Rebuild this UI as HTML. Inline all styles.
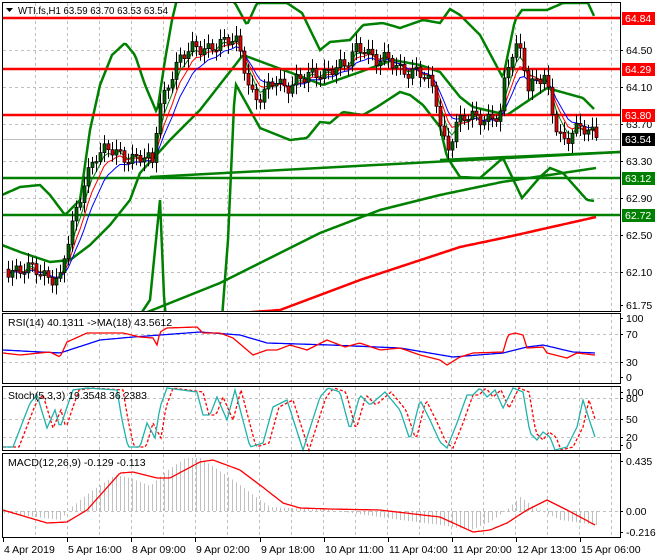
<!DOCTYPE html>
<html><head><meta charset="utf-8"><style>
html,body{margin:0;padding:0;background:#fff;width:660px;height:560px;overflow:hidden}
svg{display:block;font-family:"Liberation Sans",Tahoma,sans-serif}
</style></head><body>
<svg id="s" width="660" height="560" viewBox="0 0 660 560" xmlns="http://www.w3.org/2000/svg">
<rect width="660" height="560" fill="#fff"/>
<g id="grid" stroke="#c0c0c0" stroke-dasharray="3,3" stroke-width="1"></g>
<g id="lines"></g>
<g id="ind"></g>
<g id="frames" fill="none" stroke="#000" stroke-width="1">
<rect x="2.5" y="2.5" width="618" height="309"/>
<rect x="2.5" y="313.5" width="618" height="70"/>
<rect x="2.5" y="386.5" width="618" height="64"/>
<rect x="2.5" y="453.5" width="618" height="84"/>
</g>
<g id="txt" font-size="10.5" fill="#000"></g>
<text x="18" y="14" font-size="10.5" textLength="150" lengthAdjust="spacingAndGlyphs">WTI.fs,H1  63.59 63.70 63.53 63.54</text>
<path d="M6 8 L13 8 L9.5 12 Z" fill="#000"/>
<text x="8" y="326" font-size="10.5">RSI(14) 40.1311  -&gt;MA(18) 43.5612</text>
<text x="8" y="399" font-size="10.5">Stoch(5,3,3) 19.3548 36.2383</text>
<text x="8" y="466" font-size="10.5">MACD(12,26,9) -0.129 -0.113</text>
</svg>
<script>
var NS="http://www.w3.org/2000/svg",S=document.getElementById('s');
function el(p,t,a,txt){var e=document.createElementNS(NS,t);for(var k in a)e.setAttribute(k,a[k]);if(txt!=null)e.textContent=txt;p.appendChild(e);return e;}
function ip(P,x){if(x<=P[0][0])return P[0][1];for(var i=1;i<P.length;i++){if(x<=P[i][0]){var a=P[i-1],b=P[i];return a[1]+(b[1]-a[1])*(x-a[0])/(b[0]-a[0]);}}return P[P.length-1][1];}
var G=document.getElementById('grid'),L=document.getElementById('lines'),I=document.getElementById('ind'),T=document.getElementById('txt');
function pl(P,col,w,dash,x0,x1,step,grp){var d="";step=step||2;x0=x0==null?P[0][0]:x0;x1=x1==null?P[P.length-1][0]:x1;for(var x=x0;x<=x1;x+=step){d+=(d?"L":"M")+x+" "+ip(P,x).toFixed(1);}var a={d:d,fill:"none",stroke:col,"stroke-width":w};if(dash)a["stroke-dasharray"]=dash;return el(grp||L,"path",a);}
for(var x=35;x<620;x+=32){[[3,311],[314,383],[387,450],[454,537]].forEach(function(r){el(G,"line",{x1:x+.5,y1:r[0],x2:x+.5,y2:r[1]});});}
[50,87,124,161,198,235,272,334,362,398,419,437,511].forEach(function(y){el(G,"line",{x1:3,y1:y+.5,x2:620,y2:y+.5});});
el(L,"line",{x1:3,y1:139.5,x2:620,y2:139.5,stroke:"#c0c0c0"});
var cp=el(S,"clipPath",{id:"cm"});el(cp,"rect",{x:3,y:3,width:617,height:308});
L.setAttribute("clip-path","url(#cm)");
pl([[140,315],[220,283],[320,233],[380,210],[440,195],[502,182],[596,168]],"#008000",2.5);
pl([[170,318],[280,310],[360,280],[460,247],[503,238],[596,217]],"#ff0000",2.5);
el(L,"line",{x1:150,y1:177,x2:620,y2:152,stroke:"#008000","stroke-width":2.5});
el(L,"line",{x1:440,y1:160,x2:620,y2:152,stroke:"#008000","stroke-width":2.5});
pl([[2,195],[20,187],[40,185],[50,195],[65,215],[80,200],[90,130],[100,85],[112,55],[125,43],[135,55],[145,85],[157,113],[165,60],[172,20],[178,-5],[225,-5],[235,3],[247,25],[257,3],[287,3],[302,13],[320,50],[330,42],[350,40],[363,25],[383,23],[400,28],[423,20],[440,23],[450,9],[460,15],[480,35],[503,78],[515,20],[522,10],[547,10],[563,3],[588,3],[595,18]],"#008000",2.5);
pl([[2,245],[20,252],[50,262],[70,260],[90,245],[110,225],[130,200],[140,173],[170,140],[200,110],[243,55],[270,65],[297,75],[323,85],[360,72],[393,60],[420,65],[440,72],[460,97],[473,107],[507,115],[547,88],[583,98],[595,110]],"#008000",2.5);
pl([[2,330],[130,330],[150,300],[160,200],[165,320],[222,318],[228,240],[235,83],[250,110],[260,128],[290,140],[307,138],[320,122],[330,123],[343,112],[363,115],[377,107],[400,92],[410,95],[423,105],[440,127],[447,157],[460,177],[480,178],[503,158],[522,198],[540,177],[550,168],[563,173],[587,200],[595,201]],"#008000",2.5);
[[18,"#ff0000"],[69,"#ff0000"],[115,"#ff0000"],[178,"#008000"],[215,"#008000"]].forEach(function(a){el(L,"line",{x1:3,y1:a[0],x2:620,y2:a[0],stroke:a[1],"stroke-width":2.5});});
var CP=[[2,265],[20,272],[35,270],[50,275],[60,280],[65,255],[70,235],[78,205],[85,175],[95,155],[110,152],[125,155],[140,158],[152,165],[158,110],[163,95],[170,75],[180,60],[195,48],[210,45],[225,45],[235,40],[242,55],[250,90],[258,100],[265,95],[275,80],[285,85],[295,80],[305,80],[315,75],[325,70],[335,65],[345,70],[355,50],[365,45],[375,60],[385,62],[400,68],[415,70],[425,80],[435,95],[442,135],[448,145],[455,125],[465,120],[480,117],[500,115],[505,80],[510,60],[515,48],[522,50],[528,85],[535,80],[545,80],[550,108],[557,130],[565,140],[572,128],[580,130],[590,135],[596,136]];
var cl=[],xs=[];for(var i=0;i<149;i++){var x=4+4*i;xs.push(x);cl.push(ip(CP,x)+6*Math.sin(i*1.7)+4*Math.sin(i*0.63+1));}
function ema(n,off){var k=2/(n+1),v=cl[0],P=[];for(var i=0;i<cl.length;i++){v=v+(cl[i]-v)*k;P.push([xs[i],v+off]);}return P;}
pl(ema(4,0),"#008000",1,null,8,596,4);pl(ema(6,1),"#ff0000",1,null,8,596,4);pl(ema(9,2),"#0000ff",1,null,8,596,4);
var Cg=el(L,"g",{});
for(var i=1;i<cl.length;i++){var x=xs[i],o=cl[i-1],c=cl[i],hi=Math.min(o,c)-3-Math.abs(7*Math.sin(i*2.3)),lo=Math.max(o,c)+3+Math.abs(7*Math.cos(i*1.9));
el(Cg,"line",{x1:x+.5,y1:hi,x2:x+.5,y2:lo,stroke:"#000"});
var t=Math.min(o,c),h=Math.max(Math.abs(o-c),1.5);el(Cg,"rect",{x:x-1,y:t,width:3,height:h,fill:c<o?"#006400":"#e00000",stroke:"#000","stroke-width":0.7});}
pl([[3,350],[60,353],[100,340],[133,337],[200,332],[240,335],[267,343],[330,345],[400,348],[453,357],[503,353],[527,347],[543,345],[573,352],[595,353]],"#0000ff",1.3,null,null,null,2,I);
pl([[3,353],[20,355],[50,352],[60,357],[67,342],[87,333],[123,333],[140,337],[153,338],[157,345],[160,332],[167,328],[197,327],[203,333],[220,333],[233,338],[253,355],[267,350],[277,350],[290,345],[307,350],[327,340],[345,347],[360,343],[380,350],[400,348],[420,355],[440,360],[447,365],[460,357],[473,353],[503,352],[508,335],[515,333],[523,335],[527,348],[543,347],[547,353],[567,358],[577,353],[595,355]],"#ff0000",1.3,null,null,null,2,I);
var ST=[[3,447],[13,447],[30,403],[37,395],[47,428],[55,410],[60,428],[67,407],[73,390],[87,388],[117,390],[122,420],[128,447],[140,447],[147,423],[155,438],[160,407],[167,388],[197,392],[203,415],[210,415],[217,397],[227,420],[235,390],[250,447],[263,443],[273,407],[287,400],[303,450],[320,397],[328,388],[340,392],[350,430],[360,395],[370,405],[385,392],[400,410],[410,440],[420,400],[430,420],[440,442],[447,448],[457,423],[467,395],[473,395],[480,388],[487,397],[495,390],[503,408],[513,388],[523,392],[530,433],[537,440],[543,432],[550,437],[555,450],[567,447],[577,427],[583,400],[590,422],[595,437]];
var SS=ST.map(function(p){return [p[0]+6,p[1]];});SS[0][0]=3;
pl(SS,"#ff0000",1.3,"3,2",3,595,2,I);
pl(ST,"#20b2aa",1.3,null,null,null,2,I);
var H=[[3,513],[60,520],[70,508],[90,492],[115,475],[130,478],[150,486],[165,472],[185,458],[200,458],[230,478],[260,500],[270,507],[330,510],[400,520],[440,525],[470,530],[490,522],[505,511],[520,497],[535,508],[560,520],[595,525]];
for(var x=4;x<=596;x+=4){el(I,"line",{x1:x+.5,y1:511,x2:x+.5,y2:ip(H,x),stroke:"#c0c0c0"});}
pl([[3,510],[47,523],[67,522],[87,510],[120,473],[133,472],[157,478],[170,478],[200,462],[213,460],[240,470],[260,485],[283,503],[300,508],[330,509],[380,510],[440,517],[473,532],[490,530],[507,523],[527,510],[547,500],[567,510],[595,525]],"#ff0000",1.3,null,null,null,2,I);
function lab(y,t){el(T,"line",{x1:620,y1:y+.5,x2:623,y2:y+.5,stroke:"#000"});el(T,"text",{x:626,y:y+4},t);}
[[50,"64.50"],[87,"64.10"],[124,"63.70"],[161,"63.30"],[198,"62.90"],[235,"62.50"],[272,"62.10"],[305,"61.75"],[318,"100"],[334,"70"],[362,"30"],[377,"0"],[392,"100"],[398,"80"],[419,"50"],[437,"20"],[445,"0"],[461,"0.435"],[511,"0.00"],[532,"-0.216"]].forEach(function(a){lab(a[0],a[1]);});
function box(y,t,c){el(T,"rect",{x:622,y:y-6,width:33,height:13,fill:c});el(T,"text",{x:625,y:y+4,fill:"#fff"},t);}
box(18,"64.84","#ff0000");box(69,"64.29","#ff0000");box(115,"63.80","#ff0000");box(139,"63.54","#000");box(178,"63.12","#008000");box(215,"62.72","#008000");
[[3,"4 Apr 2019"],[67,"5 Apr 16:00"],[131,"8 Apr 09:00"],[195,"9 Apr 02:00"],[260,"9 Apr 18:00"],[324,"10 Apr 11:00"],[388,"11 Apr 04:00"],[452,"11 Apr 20:00"],[516,"12 Apr 13:00"],[580,"15 Apr 06:00"]].forEach(function(a){el(T,"line",{x1:a[0]+.5,y1:538,x2:a[0]+.5,y2:542,stroke:"#000"});el(T,"text",{x:a[0]+1,y:553},a[1]);});
</script>
</body></html>
